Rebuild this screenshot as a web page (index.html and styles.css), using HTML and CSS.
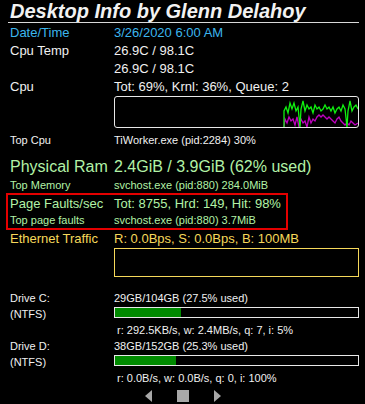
FILE: index.html
```html
<!DOCTYPE html>
<html lang="en">
<head>
  <meta charset="UTF-8">
  <title>Desktop Info</title>
  <link rel="stylesheet" href="styles.css">
</head>
<body>
  <div class="panel">
    <h1 class="title">Desktop Info by Glenn Delahoy</h1>

    <div class="row blue"><span class="label">Date/Time</span><span>3/26/2020 6:00 AM</span></div>
    <div class="row"><span class="label">Cpu Temp</span><span>26.9C / 98.1C</span></div>
    <div class="row"><span class="label"></span><span>26.9C / 98.1C</span></div>
    <div class="row"><span class="label">Cpu</span><span>Tot: 69%, Krnl: 36%, Queue: 2</span></div>
    <div class="row graph-row">
      <span class="label"></span>
      <div class="graph">
        <svg width="243" height="30" viewBox="0 0 243 30">
          <polyline fill="none" stroke="#c000c0" stroke-width="1.3" points="169,30 170,22 172,26 174,20 176,24 178,22 180,28 182,20 184,30 186,22 188,26 190,24 192,30 194,20 196,26 198,22 200,24 202,20 204,18 206,20 208,18 210,20 212,22 214,20 216,22 218,24 220,26 222,22 224,20 226,24 228,26 230,28 232,26 234,28 236,24 238,26 240,28 243,26"/>
          <polyline fill="none" stroke="#10f010" stroke-width="1.3" points="169,30 169,14 171,10 173,16 175,6 177,12 179,6 181,14 183,10 185,30 186,12 188,4 190,14 192,8 194,12 196,10 198,16 200,8 202,12 204,10 206,14 208,12 210,8 212,12 214,10 216,14 218,10 220,16 222,12 224,10 226,14 228,8 230,12 232,30 233,14 235,4 237,14 239,10 241,8 243,12"/>
        </svg>
      </div>
    </div>
    <div class="row small top-cpu"><span class="label">Top Cpu</span><span>TiWorker.exe (pid:2284) 30%</span></div>

    <div class="row green big"><span class="label">Physical Ram</span><span>2.4GiB / 3.9GiB (62% used)</span></div>
    <div class="row green small"><span class="label">Top Memory</span><span>svchost.exe (pid:880) 284.0MiB</span></div>

    <div class="highlight">
      <div class="row green"><span class="label">Page Faults/sec</span><span>Tot: 8755, Hrd: 149, Hit: 98%</span></div>
      <div class="row green small"><span class="label">Top page faults</span><span>svchost.exe (pid:880) 3.7MiB</span></div>
    </div>

    <div class="row yellow"><span class="label">Ethernet Traffic</span><span>R: 0.0Bps, S: 0.0Bps, B: 100MB</span></div>
    <div class="row"><span class="label"></span><div class="net-graph"></div></div>

    <div class="drive first">
      <span>Drive C:</span><span>29GB/104GB (27.5% used)</span>
      <span>(NTFS)</span><div class="bar"><div class="fill" style="width: 27%"></div></div>
      <span></span><span class="io">r: 292.5KB/s, w: 2.4MB/s, q: 7, i: 5%</span>
    </div>
    <div class="drive">
      <span>Drive D:</span><span>38GB/152GB (25.3% used)</span>
      <span>(NTFS)</span><div class="bar"><div class="fill" style="width: 25.3%"></div></div>
      <span></span><span class="io">r: 0.0B/s, w: 0.0B/s, q: 0, i: 100%</span>
    </div>

    <div class="pager">
      <svg width="7" height="12" viewBox="0 0 7 12"><polygon points="7,0 7,12 0,6" fill="#a8a8a8"/></svg>
      <div class="stop"></div>
      <svg width="7" height="12" viewBox="0 0 7 12"><polygon points="0,0 0,12 7,6" fill="#a8a8a8"/></svg>
    </div>
  </div>
</body>
</html>
```

FILE: styles.css
```css
body {
  margin: 0;
  background: #000;
  color: #f0f0f0;
  font-family: 'Liberation Sans', Arial, sans-serif;
  font-size: 13px;
}
.panel {
  width: 365px;
  height: 404px;
  overflow: hidden;
}
.title {
  margin: 0 6px 1px 8px;
  padding-left: 2px;
  font-size: 20px;
  font-style: italic;
  font-weight: bold;
  line-height: 22px;
  color: #f2f2f2;
  border-bottom: 1px solid #d8d8d8;
}
.row {
  display: grid;
  grid-template-columns: 104px 245px;
  padding-left: 10px;
  line-height: 18px;
  white-space: nowrap;
}
.blue {
  color: #3cb6ee;
}
.green {
  color: #b2f2a6;
}
.yellow {
  color: #f6d85a;
}
.small {
  font-size: 11px;
  line-height: 16px;
}
.top-cpu {
  margin-top: 3px;
  line-height: 18px;
}
.big {
  font-size: 16px;
  line-height: 20px;
  margin-top: 8px;
}
.graph {
  height: 30px;
  border: 1px solid #e8e8e8;
  border-radius: 3px;
  padding: 0;
}
.graph svg {
  display: block;
}
.highlight {
  margin: 0 77px 0 6px;
  border: 2px solid #e40000;
  height: 33px;
}
.highlight .row {
  padding-left: 2px;
  line-height: 16px;
}
.highlight .row:first-child {
  padding-top: 1px;
}
.net-graph {
  height: 27px;
  border: 1px solid #f6d85a;
}
.drive {
  display: grid;
  grid-template-columns: 104px 245px;
  grid-auto-rows: 16px;
  padding-left: 10px;
  font-size: 11px;
  line-height: 16px;
  white-space: nowrap;
}
.drive.first {
  margin-top: 13px;
}
.bar {
  height: 9px;
  margin-top: 1px;
  border: 1px solid #e8e8e8;
  background: #000;
}
.fill {
  height: 100%;
  background: #008a00;
}
.io {
  padding-left: 3px;
}
.pager {
  display: flex;
  justify-content: center;
  align-items: center;
  gap: 25px;
  margin-top: 4px;
}
.stop {
  width: 12px;
  height: 12px;
  background: #a8a8a8;
}
```
